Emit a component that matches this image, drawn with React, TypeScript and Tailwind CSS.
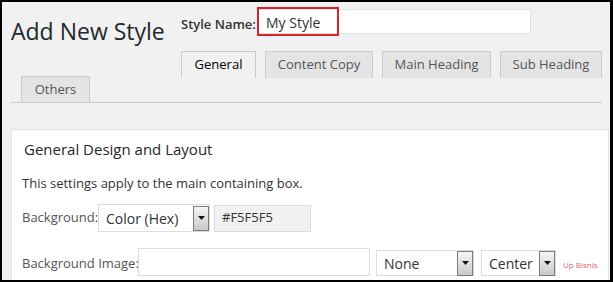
const tabs = [
  { label: "General", w: "w-[75px]", active: true },
  { label: "Content Copy", w: "w-[108px]", active: false },
  { label: "Main Heading", w: "w-[109px]", active: false },
  { label: "Sub Heading", w: "w-[102px]", active: false },
];

function Arrow() {
  return (
    <div className="flex h-[25px] w-[16px] shrink-0 items-center justify-center border border-[#7a7a7a] bg-gradient-to-b from-[#f6f6f6] to-[#c9c9c9]">
      <svg width="7" height="4" viewBox="0 0 7 4" aria-hidden>
        <path d="M0 0h7L3.5 4z" fill="#111" />
      </svg>
    </div>
  );
}

function Select({ value, w }: { value: string; w: string }) {
  return (
    <div className={`flex h-[26px] shrink-0 items-center justify-between whitespace-nowrap border border-[#dcdcdc] bg-white pl-[7px] text-[14px] text-[#333] ${w}`}>
      <span>{value}</span>
      <Arrow />
    </div>
  );
}

export default function App() {
  return (
    <div className="h-[282px] w-[613px] overflow-hidden bg-black pb-[2px] pl-[2px] pr-[3px] pt-[2px]">
      <div className="h-full overflow-hidden bg-[#f1f1f1] font-['Open_Sans',sans-serif] text-[#444]">
        {/* ── header: title + name + tabs ── */}
        <div className="flex">
          <div className="w-[179px] shrink-0 pl-[9px]">
            <h1 className="mt-[14px] whitespace-nowrap text-[23px] leading-[30px] text-[#23282d]">Add New Style</h1>
          </div>
          <div className="flex flex-col">
            <div className="mt-[7px] flex items-start">
              <span className="mt-[7px] w-[77px] shrink-0 whitespace-nowrap text-[13px] font-semibold leading-[16px] text-[#333]">
                Style Name:
              </span>
              <div className="relative h-[25px] w-[273px] shrink-0 border border-[#e0e0e0] bg-white pl-[7px] pt-[1px] text-[14px] leading-[23px] text-[#333]">
                My Style
                <div className="absolute -left-[2px] -top-[3px] h-[29px] w-[82px] border-2 border-[#d8232f]" />
              </div>
            </div>
            <div className="mt-[17px] flex gap-[9px]">
              {tabs.map((t) => (
                <div
                  key={t.label}
                  className={`flex h-[27px] shrink-0 items-center justify-center whitespace-nowrap border border-b-0 border-[#ccc] text-[13px] ${t.w} ${
                    t.active ? "bg-[#f1f1f1] text-black" : "bg-[#e4e4e4] text-[#555]"
                  }`}
                >
                  {t.label}
                </div>
              ))}
            </div>
          </div>
        </div>

        <div className="-mt-[2px] ml-[9px] mr-[8px] border-b border-[#ccc] pl-[10px]">
          <div className="flex h-[26px] w-[69px] items-center justify-center border border-b-0 border-[#ccc] bg-[#e4e4e4] text-[13px] text-[#555]">
            Others
          </div>
        </div>

        {/* ── settings panel ── */}
        <div className="ml-[9px] mr-[1px] mt-[26px] h-[200px] border border-[#e3e3e3] bg-white pl-[10px]">
          <h3 className="ml-[2px] mt-[9px] text-[15px] leading-[20px] text-[#23282d]">General Design and Layout</h3>
          <p className="mt-[15px] whitespace-nowrap text-[13px] leading-[18px] text-[#333]">This settings apply to the main containing box.</p>

          <div className="mt-[12px] flex items-center">
            <span className="w-[76px] shrink-0 whitespace-nowrap text-[13px] text-[#555]">Background:</span>
            <div className="flex h-[28px] w-[112px] shrink-0 items-center justify-between border border-[#dcdcdc] bg-white pl-[7px] text-[14px] text-[#333]">
              <span>Color (Hex)</span>
              <Arrow />
            </div>
            <div className="ml-[4px] flex h-[27px] w-[97px] shrink-0 items-center border border-[#dcdcdc] bg-[#f1f1f1] pl-[7px] text-[13px] text-[#333]">
              #F5F5F5
            </div>
          </div>

          <div className="mt-[16px] flex items-end">
            <span className="w-[116px] shrink-0 whitespace-nowrap text-[13px] leading-[26px] text-[#555]">Background Image:</span>
            <div className="h-[28px] w-[232px] shrink-0 border border-[#dcdcdc] bg-white" />
            <div className="ml-[6px] shrink-0">
              <Select value="None" w="w-[98px]" />
            </div>
            <div className="ml-[7px] shrink-0">
              <Select value="Center" w="w-[75px]" />
            </div>
            <span className="mb-[6px] ml-[7px] shrink-0 whitespace-nowrap text-[8px] leading-[10px] text-[#e2656b]">Up Bisnis</span>
          </div>
        </div>
      </div>
    </div>
  );
}
